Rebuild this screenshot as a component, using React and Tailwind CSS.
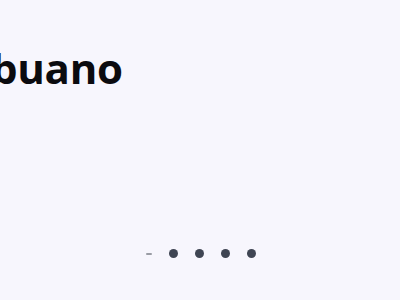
export default function App() {
  const dots = [0, 1, 2, 3];
  return (
    <div
      className="w-[400px] h-[300px] overflow-hidden bg-[#f7f6fd] flex flex-col"
      style={{ fontFamily: '"Open Sans", "Noto Sans", sans-serif' }}
    >
      <div className="pt-[39px] -ml-[60px]">
        <h1 className="text-[42px] leading-[58px] font-bold text-[#0b0b0f] whitespace-nowrap tracking-[-0.3px]">
          Cebuano
        </h1>
      </div>

      {/* Pager */}
      <div className="mt-auto pb-[42px] flex items-center justify-center gap-[17px] pl-[2px]">
        <span className="w-[6px] h-[2px] rounded-full bg-[#9a9ca4]" />
        {dots.map((d) => (
          <span key={d} className="w-[9px] h-[9px] rounded-full bg-[#3f4553]" />
        ))}
      </div>
    </div>
  );
}
